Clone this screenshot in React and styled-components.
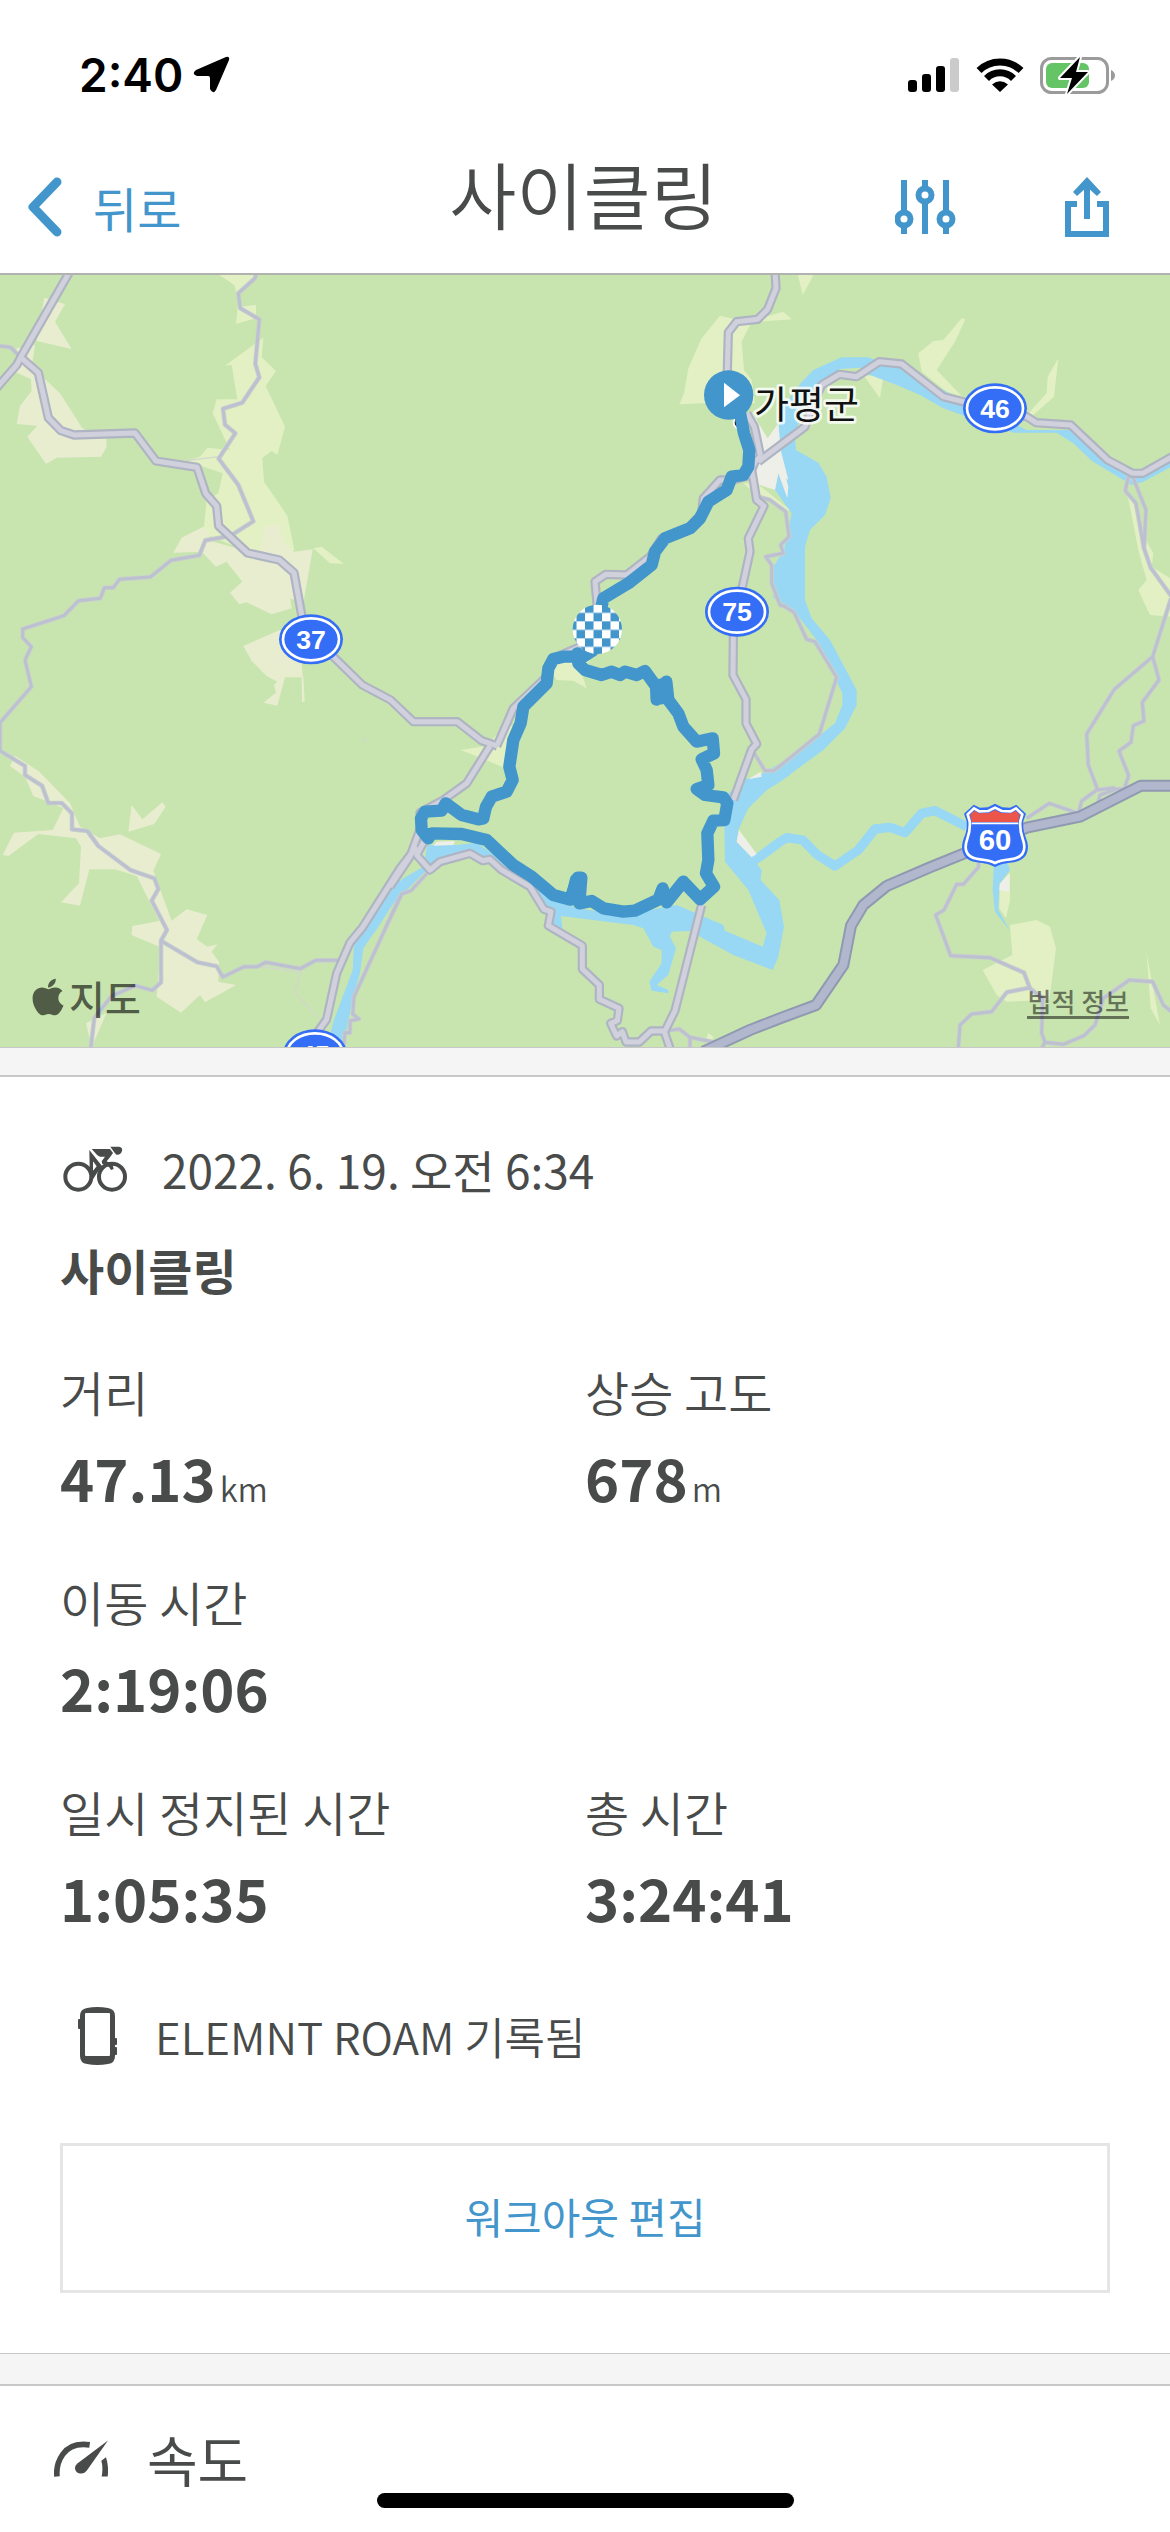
import React from 'react';
import styled, { createGlobalStyle } from 'styled-components';
import { FaApple } from 'react-icons/fa';

const colors = {
  text: '#484b4a',
  accent: '#4396cb',
  line: '#c8c8c8',
  band: '#f5f5f5',
  land: '#c8e5af',
  meadow: '#e2f0c4',
  field: '#e9edd0',
  town: '#efefe9',
  water: '#98d8f4',
  shield: '#346df6',
};

// Each map sheet keeps its own local coordinates, x / y place it on the whole map
const sheets = [
  {
    id: 'nw',
    x: 0,
    y: -9,
    meadow: [
      'M636 0H770L765 25L718 70L721 110L768 105V145L708 162L715 90L703 45Z',
      'M790 203L785 262L828 303L797 348L855 470L832 555L815 543L787 563L792 635L862 737L883 840L780 860L610 790L620 690L655 670L668 610L560 572L600 560L622 533L690 540L638 430L650 388H712L695 285L675 287Z',
      'M940 835L965 830L1032 882L990 880Z',
    ],
    field: [
      'M133 83L195 103L165 155L215 237L110 213Z',
      'M50 235L105 225L95 290L180 370L247 475L318 505L320 530L303 560L170 563L138 582L82 500L112 467L50 462L60 408L95 362L93 328L45 305Z',
      'M520 848L545 803L610 770L640 815L780 855L792 770L835 762L850 820L883 845L938 838L910 1000L870 985L875 1015L815 1033L740 997L718 1003L690 968L727 935L680 875L648 890L605 845Z',
      'M730 1128L840 1080L910 1172H755Z',
    ],
    major: [
      'M212 0L62 262L50 285L0 342L-10 354',
      'M62 262L115 308L145 443L183 482L222 495L405 489L468 573L591 592L617 670L650 708L656 768L743 849L838 870L882 908L906 1040L930 1110L1000 1160L1087 1245L1172 1290L1240 1355H1340L1372 1355L1445 1412L1492 1428',
    ],
    minor: [
      'M0 228L32 232L62 262',
      'M772 0L765 25L715 70L721 115L778 148L766 282L778 322L727 398L669 416L675 464L706 490L656 566L715 645L760 754L700 792L668 802L616 811L598 856L513 871L451 921L358 928L340 953H313L301 985L236 992L192 1037L68 1077V1103L94 1130L75 1170',
    ],
    thin: ['M560 572L656 560'],
  },
  {
    id: 'n',
    x: 1170,
    y: -9,
    meadow: [
      'M990 137L1045 150L1080 165L1055 215L1062 300L1085 330L1095 400L940 400L868 403L882 370L895 295L935 205Z',
      'M1100 148L1180 125L1205 148L1110 155Z',
      'M1060 640L1100 640L1200 720L1187 725L1140 690L1105 680Z',
    ],
    town: ['M1085 425L1133 505L1165 460L1172 540L1195 630L1165 610L1155 660L1095 640L1090 590Z'],
    major: [
      'M1155 0L1158 55L1133 118L1103 148L1040 155L1015 187L1012 300V375',
      'M1070 430L1093 470L1112 560L1095 575L1085 600L1100 690L1122 708L1075 805L1080 845L1055 960L1041 1025L1030 1100L1029 1215L1068 1288V1360L1100 1422L1085 1438L1030 1590',
      'M1080 615L1030 630H990L940 685L935 730L900 770L815 805L780 860L710 915L647 913L615 935L622 1010L600 1110L560 1135L490 1165L465 1225L370 1315L335 1395L320 1428',
    ],
    minor: ['M1105 680L1140 690L1187 725L1197 800L1172 825L1180 850L1127 860L1145 885V940L1170 1005L1190 1010'],
  },
  {
    id: 'ne',
    x: 2340,
    y: -9,
    meadow: [
      'M50 0H98V20L68 75Z',
      'M415 250L460 213L490 210L545 145L556 148L525 215L470 300L545 378L500 365L425 305Z',
      'M835 265L822 380L760 435L745 430L800 370L803 320Z',
      'M250 315L310 320L300 385Z',
      'M1035 640L1060 700L1092 800L1120 850L1115 890L1180 930V1040L1110 1035L1075 960L1100 930L1075 840L1052 720Z',
    ],
    water: [
      'M0 560L-5 430L62 340L100 300L185 262H262L360 290L555 395L740 480H880L990 580L1050 620H1090L1175 575V590L1090 635L1055 645L1030 630L935 572L880 520L830 488H700L560 440L490 415L420 375L350 345L262 312L240 293L180 297L125 335L70 400L45 500L48 540L115 578L140 620L152 685L135 735L90 780L75 830V990L95 1045L150 1110L230 1260V1305L195 1375L130 1440L0 1535L-40 1560L-95 1615L-165 1580L-110 1530L-60 1515L0 1480L120 1395L165 1360L187 1305V1270L110 1110L40 1020L-20 985V890L12 840L35 730L-15 660L-5 610Z',
    ],
    town: ['M0 555L25 650L22 685L-5 610Z'],
    major: ['M-65 575L75 470L100 400L125 345L178 313L230 320L298 275L365 282L490 380L560 398L740 440L768 458L872 465L983 570L1058 610H1088L1180 558'],
    minor: [
      'M0 1005L10 1007L42 1027L80 1108L105 1115L170 1222L118 1392L0 1488L-18 1502H-45L-80 1445',
      'M1045 620L1036 662L1068 700L1092 835L1112 893L1175 980',
      'M1058 620L1098 720L1092 835',
      'M1173 985L1118 1160L1003 1258L920 1392L925 1485L952 1557',
      'M1118 1160L1137 1230L1087 1297L1092 1353L1060 1367L1053 1417L1017 1443L1046 1517L1033 1555',
    ],
  },
  {
    id: 'sw',
    x: 0,
    y: 1161,
    field: [
      'M752 0H905L908 52L855 52L832 137L790 128L828 98L822 75L832 65L800 48Z',
      'M905 50H910L914 125L906 125Z',
      'M45 287L118 335L210 430L240 500L300 535L360 523L483 582L460 632L515 782L560 748L622 765L590 838L622 860L652 853L635 875L657 905L655 965L708 975L615 1027L600 1005L543 1058L470 1010L482 862L395 825L397 798L478 783L410 648L345 628H268L240 737L183 727L237 670L243 560L228 535L115 522L25 588L8 585L42 518L158 510L190 445L145 425L100 408L75 350L30 318Z',
      'M385 515L395 435L427 478L487 427L497 440L463 492Z',
      'M258 1090L320 1058L275 1162Z',
    ],
    water: ['M1200 660L1080 815L1062 850L1058 930L1000 1085L980 1165H1028L1060 1010L1080 940L1090 865L1135 800L1200 700Z'],
    major: ['M1250 560L1200 625L1087 803L1050 848L1010 940L980 1078L950 1120'],
    minor: [
      'M75 0L94 80L0 188V272L75 318V345L126 377L145 429H185L216 460V508L262 513L295 558L391 630L463 655L475 687L455 722L501 810L483 842V967L457 991L406 977L335 1008L283 1073L272 1165',
      'M483 842L592 907L650 919L669 951L732 920H772L797 907L901 926L947 901H1015',
      'M1200 710L1062 1010L1058 1062L1077 1077L1050 1082V1118H1035L1030 1165',
    ],
    thin: ['M780 920L903 937L883 997L960 1078', 'M1087 233L1100 247'],
  },
  {
    id: 's',
    x: 1170,
    y: 1161,
    meadow: [
      'M480 30L520 0H600L575 40L590 85L550 62L500 60Z',
      'M345 195L375 200L345 325L300 305L212 270L290 258Z',
      'M955 1120L970 1130L965 1150L945 1145Z',
    ],
    water: [
      'M-10 700L40 655L100 620L112 555H200L260 548L320 590L420 660L480 715L560 745L700 765L860 735L1000 795L1005 812L1118 860L1130 820L1075 690L1005 605L1003 490L1030 400L1065 360L1110 355L1145 340L1200 305V345L1130 390L1075 445L1045 510L1040 545L1085 592L1115 630L1112 660L1168 720L1182 800L1165 890L1148 930L1030 885L930 830L915 812L845 815L840 830L858 865L835 945L800 975L835 990V1000L785 992L778 965L815 910V870L790 860L760 805L730 795L513 768L518 810L490 795L480 750L420 680L340 625L240 585L150 600L100 640L-10 750Z',
    ],
    town: ['M1047 510L1100 582L1085 592L1040 545Z', 'M1075 358L1112 335L1115 350Z', 'M140 545L195 543L190 555L130 557Z'],
    major: [
      'M300 258L230 370L160 420L90 458L93 500L60 590L0 680',
      'M110 530L80 585L120 630L150 605L240 580L278 602L300 598L335 630L420 680L462 748L483 755L475 797L577 857V927L628 975V1018L687 1045L682 1082L662 1090L680 1128L697 1115L708 1146H748L783 1113H825L855 1052L935 735',
      'M822 1113L840 1165',
    ],
    minor: ['M115 635L63 692L35 702L0 775L-12 800', 'M825 1113L868 1107L900 1132L970 1146', 'M900 1132V1165'],
  },
  {
    id: 'se',
    x: 2340,
    y: 1161,
    meadow: [
      'M690 795L770 780L810 800L828 865L808 1020L680 1025L650 1005L608 930L697 885Z',
      'M660 670L690 640V720L678 775L658 745Z',
      'M1100 880L1115 960L1140 1095L1112 1045Z',
    ],
    town: ['M660 672L688 640V695L658 690Z'],
    water: ['M642 600H680L690 630L658 672L655 750L690 812L645 755L638 690Z'],
    stream: ['M-95 612L-60 590L0 545L20 533L68 540L110 583L165 618L235 570L285 507L330 502L375 518L425 460L465 452L560 500'],
    highway: ['M-230 1175L-90 1110L0 1075L108 1035L190 915L213 797L250 735L320 678L450 622L640 545L740 503L900 470L1083 377H1180'],
    minor: [
      'M740 475L808 430L895 460L905 423L950 390L1005 383',
      'M955 425L960 405L1010 387H1035',
      'M597 605L595 622L550 673H530L492 750L467 765L512 887L630 893L732 938L750 985L788 1015L785 1120L795 1147L785 1165',
      'M748 983L680 997L635 1055L575 1062L540 1095L535 1165',
      'M795 1147L850 1153L912 1127L945 1095L970 1015L1048 960L1118 965L1150 1035L1180 1060',
    ],
  },
];

const mapLayers = [
  { kind: 'meadow', fill: colors.meadow },
  { kind: 'field', fill: colors.field },
  { kind: 'water', fill: colors.water },
  { kind: 'stream', stroke: colors.water, width: 28 },
  { kind: 'town', fill: colors.town },
  { kind: 'thin', stroke: '#d3d6cc', width: 4 },
  { kind: 'minor', stroke: '#c9d2cb', width: 14 },
  { kind: 'minor', stroke: '#bdc0d0', width: 9 },
  { kind: 'major', stroke: '#afb4c3', width: 28 },
  { kind: 'major', stroke: '#d0d1dc', width: 15 },
  { kind: 'highway', stroke: '#9099b2', width: 36 },
  { kind: 'highway', stroke: '#b1b7cc', width: 24 },
];

const route = [
  // start -> finish marker -> loop
  'M2185 366L2220 421L2232 481L2248 531L2245 581L2230 606L2195 611L2180 651L2125 686L2100 736L2070 766L1995 796L1965 836L1955 876L1885 931L1810 976L1790 1066L1780 1131L1750 1151L1690 1151L1660 1158L1645 1186L1640 1231L1570 1301L1562 1351L1540 1401L1528 1481L1538 1521L1520 1556L1475 1571L1458 1601L1450 1636L1435 1639L1385 1626L1337 1591L1325 1613L1275 1616L1263 1636L1265 1671L1285 1696L1295 1681L1385 1683L1460 1701L1540 1776L1595 1811L1660 1866L1710 1880L1734 1814L1744 1814L1738 1891L1775 1884L1810 1906L1870 1916L1905 1913L1975 1880L1988 1846L2000 1888L2050 1826L2100 1879L2142 1841L2118 1801L2125 1761L2122 1681L2140 1643L2173 1641L2182 1591L2170 1573L2115 1566L2090 1548L2125 1536L2120 1491L2105 1459L2142 1441L2138 1396L2090 1406L2050 1361L2035 1321L2005 1281L1999 1226L1970 1280L1968 1240L1935 1194L1910 1206L1875 1196L1860 1206L1835 1196L1805 1206L1755 1191L1735 1171L1732 1141',
  'M1984 1234V1276',
  'M1728 1820L1714 1878',
];

const shields = [
  { label: '37', x: 933, y: 1099 },
  { label: '75', x: 2211, y: 1016 },
  { label: '46', x: 2985, y: 406 },
  { label: '45', x: 945, y: 2344 },
];

const RouteMap = () => (
  <MapSvg viewBox="0 0 3510 2322" role="img" aria-label="경로 지도">
    <defs>
      <pattern id="checker" x="1755" y="994" width="51" height="51" patternUnits="userSpaceOnUse">
        <rect width="51" height="51" fill="#fff" />
        <rect width="25.5" height="25.5" fill={colors.accent} />
        <rect x="25.5" y="25.5" width="25.5" height="25.5" fill={colors.accent} />
      </pattern>
    </defs>

    {mapLayers.map((layer, index) => (
      <g
        key={index}
        fill={layer.fill || 'none'}
        stroke={layer.stroke || 'none'}
        strokeWidth={layer.width}
        strokeLinejoin="round"
      >
        {sheets.map((sheet) => (
          <g key={sheet.id} transform={`translate(${sheet.x} ${sheet.y})`}>
            {(sheet[layer.kind] || []).map((d) => (
              <path key={d} d={d} />
            ))}
          </g>
        ))}
      </g>
    ))}

    <circle cx="2218" cy="449" r="17" fill="#111" stroke="#fff" strokeWidth="6" />
    {route.map((d) => (
      <path
        key={d}
        d={d}
        fill="none"
        stroke={colors.accent}
        strokeWidth="37"
        strokeLinejoin="round"
        strokeLinecap="round"
      />
    ))}

    <PlaceName x="2262" y="434">가평군</PlaceName>

    <circle cx="2186" cy="366" r="74" fill={colors.accent} />
    <path d="M2172 329L2220 367L2172 403Z" fill="#fff" />
    <circle cx="1792" cy="1069" r="74" fill="url(#checker)" />

    {shields.map((shield) => (
      <g key={shield.label} transform={`translate(${shield.x} ${shield.y})`}>
        <ellipse rx="96" ry="75" fill={colors.shield} />
        <ellipse rx="84" ry="63" fill="none" stroke="#fff" strokeWidth="8" />
        <RoadNumber y="29">{shield.label}</RoadNumber>
      </g>
    ))}

    {/* expressway shield */}
    <g transform="translate(2985 1687)">
      <path
        d="M0 -95L22 -84L45 -83L64 -92L93 -65L85 -42C82 0 98 5 99 35C98 72 70 80 45 82C25 84 15 88 0 95C-15 88 -25 84 -45 82C-70 80 -98 72 -99 35C-98 5 -82 0 -85 -42L-93 -65L-64 -92L-45 -83L-22 -84Z"
        fill={colors.shield}
      />
      <path
        d="M0 -83L20 -73L47 -72L63 -81L82 -63L76 -42C72 2 88 8 88 35C88 62 65 70 45 72C25 74 13 76 0 83C-13 76 -25 74 -45 72C-65 70 -88 62 -88 35C-88 8 -72 2 -76 -42L-82 -63L-63 -81L-47 -72L-20 -73Z"
        fill={colors.shield}
        stroke="#fff"
        strokeWidth="8"
      />
      <path d="M0 -76L18 -67L48 -66L62 -74L74 -62L70 -40H-70L-74 -62L-62 -74L-48 -66L-18 -67Z" fill="#ec5549" />
      <path d="M-70 -36H70" stroke="#fff" strokeWidth="5" />
      <RoadNumber y="45" $large>60</RoadNumber>
    </g>
  </MapSvg>
);

const LocationIcon = () => (
  <svg width="37" height="37" viewBox="0 0 37 37">
    <path
      d="M33 1Q37 0 36 4L23 34Q20 39 17 33V22Q17 20 15 20H4Q-2 18 3 14Z"
      fill="#000"
    />
  </svg>
);

const SignalIcon = () => (
  <svg width="52" height="36" viewBox="0 0 52 36">
    <rect x="0" y="23" width="9" height="12" rx="3" />
    <rect x="14" y="17" width="9" height="18" rx="3" />
    <rect x="28" y="9" width="9" height="26" rx="3" />
    <rect x="42" y="1" width="9" height="34" rx="3" fill="#cbcbcb" />
  </svg>
);

const WifiIcon = () => (
  <svg width="50" height="38" viewBox="0 0 50 38">
    <g fill="none" stroke="#000" strokeWidth="7">
      <path d="M4 14.500A30 30 0 0 1 46 14.500" />
      <path d="M11.500 22.500A19 19 0 0 1 38.500 22.500" />
    </g>
    <path d="M25 36L17 28.500Q25 22 33 28.500Z" />
  </svg>
);

const BatteryIcon = () => (
  <svg width="76" height="40" viewBox="0 0 76 40">
    <rect x="1.500" y="3.500" width="66" height="34" rx="10" fill="none" stroke="#9b9b9b" strokeWidth="3" />
    <path d="M71 15Q75 17 75 20.500Q75 24 71 26Z" fill="#9b9b9b" />
    <rect x="6" y="8" width="43" height="25" rx="6" fill="#65c466" />
    <path
      d="M40 2L20 23H32L27 39L48 17H36Z"
      fill="#000"
      stroke="#fff"
      strokeWidth="4"
      paintOrder="stroke"
      strokeLinejoin="round"
    />
  </svg>
);

const BackIcon = () => (
  <svg width="36" height="60" viewBox="0 0 36 60">
    <path
      d="M30 5L6 30L30 55"
      fill="none"
      stroke="currentColor"
      strokeWidth="9"
      strokeLinecap="round"
      strokeLinejoin="round"
    />
  </svg>
);

const SlidersIcon = () => (
  <svg width="61" height="54" viewBox="0 0 61 54" fill="none" stroke="currentColor" strokeWidth="6">
    <path d="M9 0V32M9 46V54M30 0V8M30 22V54M51 0V32M51 46V54" />
    <circle cx="9" cy="39" r="6.500" strokeWidth="6" />
    <circle cx="30" cy="15" r="6.500" strokeWidth="6" />
    <circle cx="51" cy="39" r="6.500" strokeWidth="6" />
  </svg>
);

const ShareIcon = () => (
  <svg width="44" height="60" viewBox="0 0 44 60" fill="none" stroke="currentColor" strokeWidth="6">
    <path d="M12 27H3V57H41V27H32" />
    <path d="M22 42V8" />
    <path d="M22 0L36 15L32 19L22 10L12 19L8 15Z" fill="currentColor" stroke="none" />
  </svg>
);

const CyclistIcon = () => (
  <svg width="64" height="46" viewBox="37 34 192 138">
    <g fill="none" stroke="currentColor" strokeWidth="12">
      <circle cx="83" cy="126" r="39" />
      <circle cx="184" cy="126" r="39" />
    </g>
    <g fill="currentColor">
      <path d="M179 36H205Q217 38 214 49Q210 62 197 60L190 52Z" />
      <path d="M123 43H178L187 55L178 68L168 80L186 91L189 103L181 106L175 97L155 88L153 80L163 66H148L140 62Z" />
      <path
        d="M116 46L154 94L146 104L128 132L118 128L122 106L117 100ZM127 80V108L138 95Z"
        fillRule="evenodd"
      />
    </g>
  </svg>
);

const DeviceIcon = () => (
  <svg width="39" height="58" viewBox="0 0 39 58" fill="currentColor">
    <path
      fillRule="evenodd"
      d="M9 1Q19 -1 30 1Q37 2 37 9V49Q37 56 30 57Q19 59 9 57Q2 56 2 49V9Q2 2 9 1ZM8 6Q7 6 7 7V48Q7 49 8 49H31Q32 49 32 48V7Q32 6 31 6Z"
    />
    <rect x="0" y="12" width="3" height="10" rx="1" />
    <rect x="36" y="31" width="3" height="7" rx="1" />
    <rect x="36" y="40" width="3" height="8" rx="1" />
  </svg>
);

const GaugeIcon = () => (
  <svg width="54" height="37" viewBox="42 47 162 110">
    <path
      d="M51 156Q47 120 68 90Q93 53 149 61"
      fill="none"
      stroke="currentColor"
      strokeWidth="17"
    />
    <path d="M184 109L198 98Q207 125 203 156H185Q190 130 184 109Z" fill="currentColor" />
    <path d="M204 48L140 139Q132 149 120 147Q106 144 105 131Q105 123 112 117Z" fill="currentColor" />
  </svg>
);

const stats = [
  { label: '거리', value: '47.13', unit: 'km' },
  { label: '상승 고도', value: '678', unit: 'm' },
  { label: '이동 시간', value: '2:19:06', wide: true },
  { label: '일시 정지된 시간', value: '1:05:35' },
  { label: '총 시간', value: '3:24:41' },
];

const App = () => {
  return (
    <>
      <GlobalStyle />
      <StatusBar>
        <Clock>
          2:40
          <LocationIcon />
        </Clock>
        <StatusIcons>
          <SignalIcon />
          <WifiIcon />
          <BatteryIcon />
        </StatusIcons>
      </StatusBar>

      <NavBar>
        <BackButton type="button">
          <BackIcon />
          뒤로
        </BackButton>
        <NavTitle>사이클링</NavTitle>
        <NavActions>
          <IconButton type="button" aria-label="설정">
            <SlidersIcon />
          </IconButton>
          <IconButton type="button" aria-label="공유">
            <ShareIcon />
          </IconButton>
        </NavActions>
      </NavBar>

      <main>
        <MapPanel>
          <RouteMap />
          <MapFooter>
            <MapBrand>
              <FaApple size={42} />
              지도
            </MapBrand>
            <LegalLink href="#legal">법적 정보</LegalLink>
          </MapFooter>
        </MapPanel>
        <Band />

        <Summary>
          <DateRow>
            <CyclistIcon />
            <time dateTime="2022-06-19T06:34">2022. 6. 19. 오전 6:34</time>
          </DateRow>
          <WorkoutName>사이클링</WorkoutName>
          <StatGrid>
            {stats.map((stat) => (
              <Stat key={stat.label} $wide={stat.wide}>
                <StatLabel>{stat.label}</StatLabel>
                <StatValue>
                  {stat.value}
                  {stat.unit && <Unit>{stat.unit}</Unit>}
                </StatValue>
              </Stat>
            ))}
          </StatGrid>
          <DeviceRow>
            <DeviceIcon />
            ELEMNT ROAM 기록됨
          </DeviceRow>
          <EditButton type="button">워크아웃 편집</EditButton>
        </Summary>
        <Band $tall />

        <SpeedSection>
          <GaugeIcon />
          <SectionTitle>속도</SectionTitle>
        </SpeedSection>
      </main>
      <HomeIndicator />
    </>
  );
};

// Styled Components
const GlobalStyle = createGlobalStyle`
  * {
    box-sizing: border-box;
  }

  body {
    margin: 0;
    background: #fff;
    color: ${colors.text};
    font-family: "Noto Sans CJK KR", "Noto Sans", sans-serif;
  }

  svg {
    display: block;
    flex-shrink: 0;
  }

  button {
    padding: 0;
    border: none;
    background: none;
    color: ${colors.accent};
    font-family: inherit;
    cursor: pointer;
  }
`;

const StatusBar = styled.div`
  display: flex;
  justify-content: space-between;
  align-items: center;
  height: 141px;
  padding: 8px 54px 0 79px;
  color: #000;
`;

const Clock = styled.div`
  display: flex;
  align-items: center;
  gap: 10px;
  font-family: Inter, sans-serif;
  font-size: 46px;
  font-weight: 600;
  line-height: 56px;
`;

const StatusIcons = styled.div`
  display: flex;
  align-items: center;
  gap: 15px;
`;

const NavBar = styled.header`
  position: relative;
  z-index: 1;
  display: grid;
  grid-template-columns: 1fr auto 1fr;
  align-items: center;
  height: 134px;
  margin-bottom: -2px;
  padding: 0 61px 0 27px;
  border-bottom: 2px solid #b2b3b0;
`;

const BackButton = styled.button`
  display: flex;
  align-items: center;
  gap: 30px;
  font-size: 48px;
  line-height: 64px;
`;

const NavTitle = styled.h1`
  margin: 0;
  padding: 0 0 30px 31px;
  font-size: 73px;
  font-weight: 350;
  line-height: 96px;
`;

const NavActions = styled.div`
  display: flex;
  justify-content: flex-end;
  align-items: center;
  gap: 109px;
`;

const IconButton = styled.button`
  display: block;
`;

const MapPanel = styled.section`
  position: relative;
  background: ${colors.land};
`;

const MapSvg = styled.svg`
  width: 100%;
  height: auto;
`;

const PlaceName = styled.text`
  fill: #111;
  stroke: rgba(255, 255, 255, 0.8);
  stroke-width: 16px;
  stroke-linejoin: round;
  paint-order: stroke;
  font-size: 114px;
  font-weight: 400;
`;

const RoadNumber = styled.text`
  fill: #fff;
  text-anchor: middle;
  font-family: "Liberation Sans", Arial, sans-serif;
  font-size: ${(props) => (props.$large ? '88px' : '80px')};
  font-weight: 700;
`;

const MapFooter = styled.div`
  position: absolute;
  left: 0;
  right: 0;
  bottom: 0;
  display: flex;
  justify-content: space-between;
  align-items: flex-end;
  padding: 0 41px 26px 27px;
`;

const MapBrand = styled.div`
  display: flex;
  align-items: center;
  color: rgba(0, 0, 0, 0.6);
  font-size: 39px;
  font-weight: 500;
  line-height: 48px;
`;

const LegalLink = styled.a`
  border-bottom: 3px solid currentColor;
  color: rgba(0, 0, 0, 0.5);
  font-size: 26px;
  font-weight: 500;
  line-height: 30px;
  text-decoration: none;
  margin-bottom: 2px;
`;

const Band = styled.div`
  height: ${(props) => (props.$tall ? '33px' : '30px')};
  border-top: 1px solid ${colors.line};
  border-bottom: 2px solid ${colors.line};
  background: ${colors.band};
`;

const Summary = styled.section`
  padding: 60px;
`;

const DateRow = styled.div`
  display: flex;
  align-items: center;
  gap: 35px;
  padding-left: 3px;
  font-size: 46px;
  line-height: 64px;
`;

const WorkoutName = styled.h2`
  margin: 36px 0 58px;
  font-size: 48px;
  font-weight: 700;
  line-height: 64px;
`;

const StatGrid = styled.dl`
  display: grid;
  grid-template-columns: 1fr 1fr;
  row-gap: 50px;
  margin: 0;
`;

const Stat = styled.div`
  display: flex;
  flex-direction: column;
  gap: 12px;
  grid-column: ${(props) => (props.$wide ? '1 / -1' : 'auto')};
`;

const StatLabel = styled.dt`
  font-size: 48px;
  font-weight: 350;
  line-height: 64px;
`;

const StatValue = styled.dd`
  margin: 0;
  font-size: 58px;
  font-weight: 700;
  line-height: 84px;
`;

const Unit = styled.span`
  margin-left: 4px;
  font-size: 33px;
  font-weight: 350;
  line-height: 33px;
`;

const DeviceRow = styled.div`
  display: flex;
  align-items: center;
  gap: 38px;
  margin: 65px 0 75px;
  padding-left: 18px;
  font-size: 44px;
  font-weight: 350;
  line-height: 64px;
`;

const EditButton = styled.button`
  width: 100%;
  height: 150px;
  && {
    padding-bottom: 6px;
    border: 3px solid #e5e5e5;
  }
  font-size: 42px;
`;

const SpeedSection = styled.section`
  display: flex;
  align-items: center;
  gap: 39px;
  padding: 32px 54px 35px;
`;

const SectionTitle = styled.h2`
  margin: 0;
  font-size: 55px;
  font-weight: 400;
  line-height: 80px;
`;

const HomeIndicator = styled.div`
  position: fixed;
  bottom: 24px;
  left: 50%;
  width: 417px;
  height: 15px;
  margin-left: -208px;
  border-radius: 8px;
  background: #000;
`;

export default App;
